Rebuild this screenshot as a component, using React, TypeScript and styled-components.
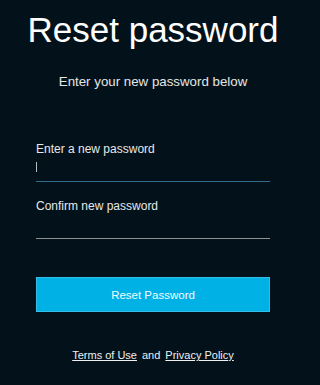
import React from 'react';
import styled, { createGlobalStyle } from 'styled-components';

const GlobalStyle = createGlobalStyle`
  html, body {
    margin: 0;
    padding: 0;
    background-color: #03121a;
  }
  body {
    font-family: "Liberation Sans", Arial, sans-serif;
    color: #f2f2f2;
  }
`;

const Page = styled.div`
  width: 306px;
  min-height: 385px;
  box-sizing: border-box;
  padding: 0 36px;
  display: flex;
  flex-direction: column;
`;

const Title = styled.h1`
  margin: 10px -36px 0;
  font-size: 35px;
  line-height: 40px;
  font-weight: normal;
  text-align: center;
  color: #ffffff;
`;

const Subtitle = styled.p`
  margin: 24px -36px 0;
  font-size: 13.3px;
  line-height: 15px;
  text-align: center;
  color: #e6e6e6;
`;

const Form = styled.form`
  display: flex;
  flex-direction: column;
  margin-top: 53px;
`;

const Label = styled.label<{ $gap?: number }>`
  display: block;
  margin-top: ${p => p.$gap ?? 0}px;
  font-size: 12px;
  line-height: 14px;
  color: #e8e8e8;
`;

const Field = styled.div<{ $active?: boolean }>`
  position: relative;
  height: 25px;
  border-bottom: 1px solid ${p => (p.$active ? '#346c8e' : '#8e9294')};
`;

const Input = styled.input`
  width: 100%;
  height: 25px;
  box-sizing: border-box;
  padding: 0;
  border: none;
  outline: none;
  background: transparent;
  color: #ffffff;
  font-family: inherit;
  font-size: 12px;
  caret-color: transparent;
`;

const Caret = styled.span`
  position: absolute;
  left: 0;
  top: 6px;
  width: 1px;
  height: 10px;
  background-color: #b8bcbf;
`;

const Button = styled.button`
  margin-top: 38px;
  height: 35px;
  width: 100%;
  border: 1px solid #35bdea;
  background-color: #00b1e6;
  color: #f4fbff;
  font-family: inherit;
  font-size: 11.5px;
  cursor: pointer;
`;

const Footer = styled.p`
  margin: 37px -36px 0;
  font-size: 11px;
  line-height: 13px;
  text-align: center;
  color: #f0f0f0;
`;

const FooterLink = styled.a`
  color: #f0f0f0;
  text-decoration: underline;
`;

const Joiner = styled.span`
  margin: 0 5px;
`;

function App() {
  return (
    <Page>
      <GlobalStyle />
      <Title>Reset password</Title>
      <Subtitle>Enter your new password below</Subtitle>
      <Form onSubmit={e => e.preventDefault()}>
        <Label htmlFor="new-password">Enter a new password</Label>
        <Field $active>
          <Input id="new-password" type="password" />
          <Caret />
        </Field>
        <Label htmlFor="confirm-password" $gap={17}>Confirm new password</Label>
        <Field>
          <Input id="confirm-password" type="password" />
        </Field>
        <Button type="submit">Reset Password</Button>
      </Form>
      <Footer>
        <FooterLink href="#">Terms of Use</FooterLink>
        <Joiner>and</Joiner>
        <FooterLink href="#">Privacy Policy</FooterLink>
      </Footer>
    </Page>
  );
}

export default App;
